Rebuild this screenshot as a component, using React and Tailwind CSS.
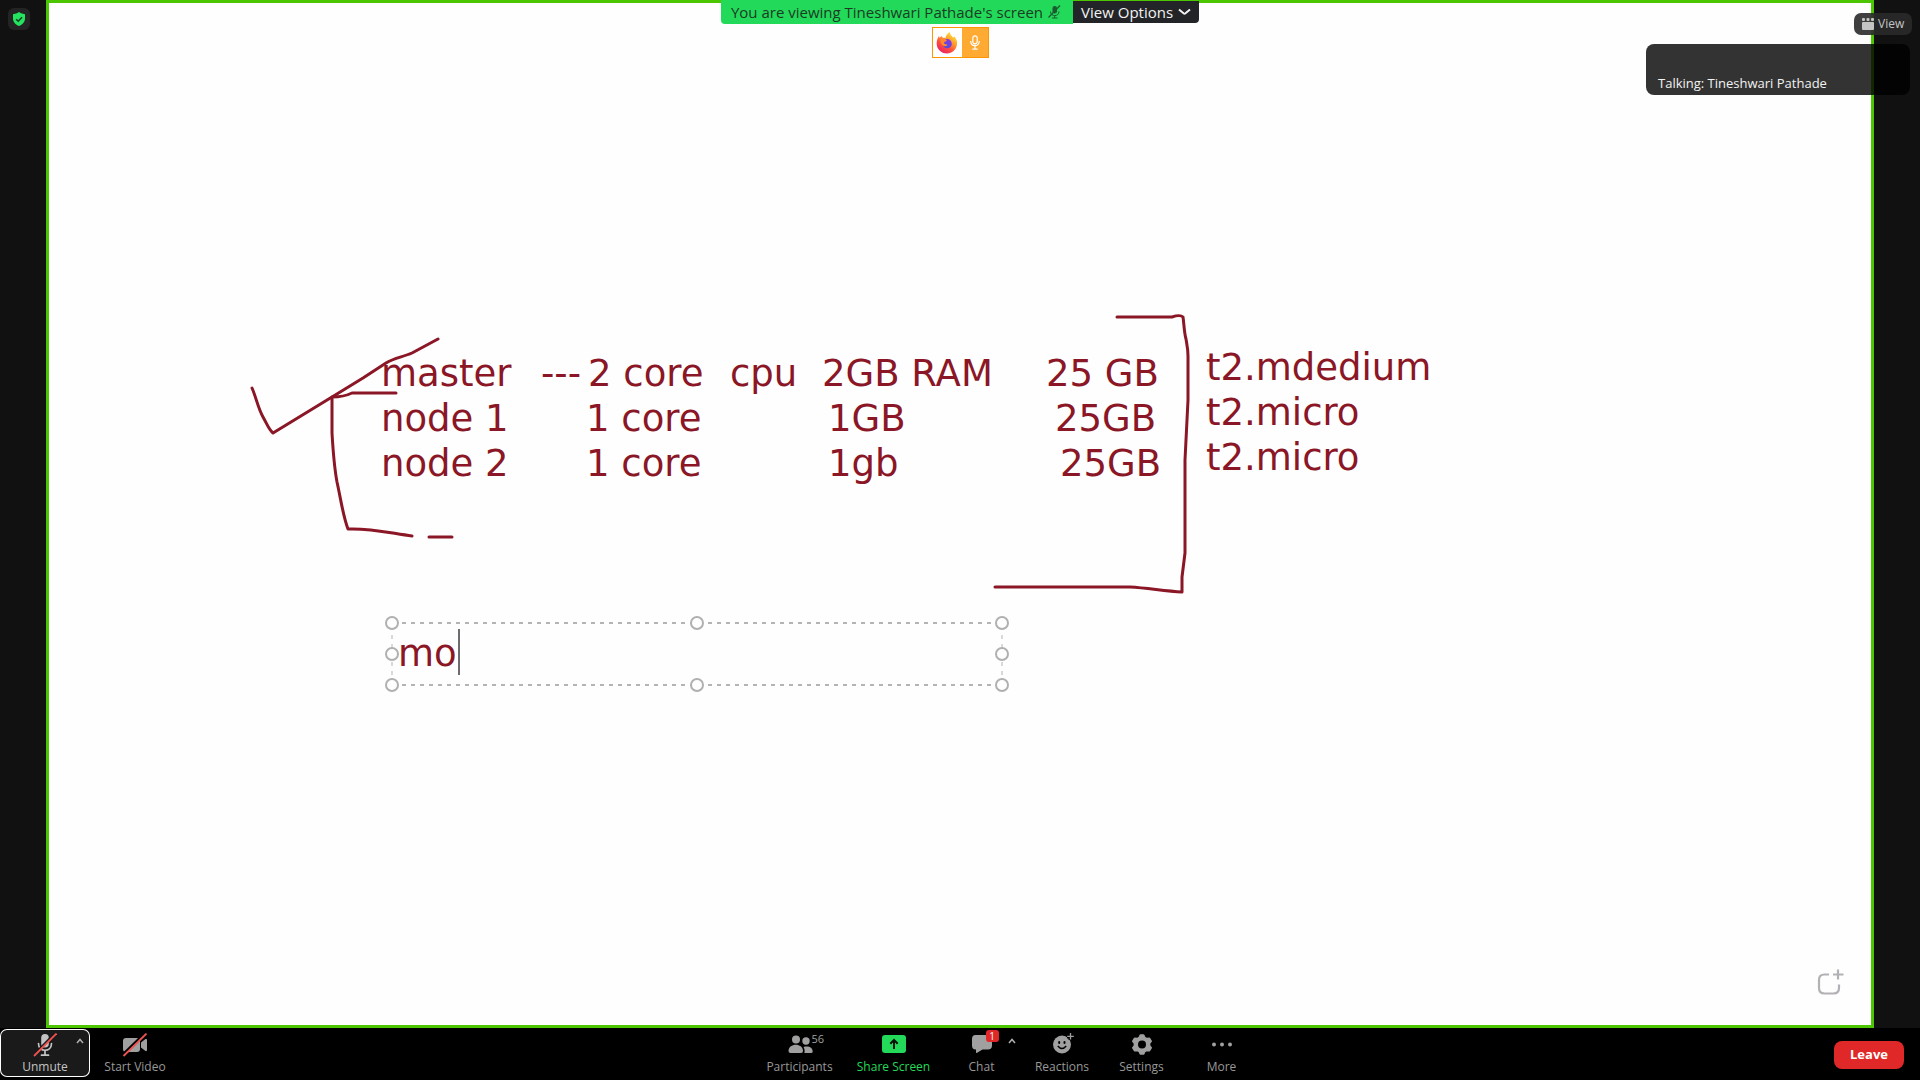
import React from "react";

const INK = "#8a1626";

/* Text runs typed on the shared whiteboard */
const RUNS = [
  { text: "master", at: "left-[332px] top-[348px]" },
  { text: "---", at: "left-[492px] top-[348px]" },
  { text: "2 core", at: "left-[539px] top-[348px]" },
  { text: "cpu", at: "left-[681px] top-[348px]" },
  { text: "2GB RAM", at: "left-[773px] top-[348px]" },
  { text: "25 GB", at: "left-[997px] top-[348px]" },
  { text: "node 1", at: "left-[332px] top-[393px]" },
  { text: "1 core", at: "left-[537px] top-[393px]" },
  { text: "1GB", at: "left-[779px] top-[393px]" },
  { text: "25GB", at: "left-[1006px] top-[393px]" },
  { text: "node 2", at: "left-[332px] top-[438px]" },
  { text: "1 core", at: "left-[537px] top-[438px]" },
  { text: "1gb", at: "left-[779px] top-[438px]" },
  { text: "25GB", at: "left-[1011px] top-[438px]" },
  { text: "t2.mdedium", at: "left-[1157px] top-[342px]" },
  { text: "t2.micro", at: "left-[1157px] top-[387px]" },
  { text: "t2.micro", at: "left-[1157px] top-[432px]" },
];

const HANDLES = [
  [8, 8], [313, 8], [618, 8],
  [8, 39], [618, 39],
  [8, 70], [313, 70], [618, 70],
];

function Strokes() {
  return (
    <svg
      className="absolute left-[191px] top-[297px]"
      width="970"
      height="310"
      viewBox="240 300 970 310"
      fill="none"
      stroke={INK}
      strokeWidth="3"
      strokeLinecap="round"
      strokeLinejoin="round"
      aria-hidden="true"
    >
      <path d="M252 388 C256 397 258 408 263 417 C267 424 269 430 273 433 L332 397 L363 378 L386 363 C394 358 403 357 412 353 L438 339" />
      <path d="M396 393 H352 C346 396 340 397 332 397 V433 C333 450 334 466 337 482 C341 500 343 516 348 529 C370 528 390 533 412 536" />
      <path d="M429 537 H452" />
      <path d="M1117 317 H1172 C1178 315 1181 315 1183 317 C1184 323 1184 332 1186 339 C1187 345 1188 349 1188 356 V400 L1185 460 V553 L1182 577 L1182 592 C1164 591 1148 588 1130 587 H995" />
    </svg>
  );
}

function EditBox() {
  return (
    <div className="absolute left-[335px] top-[612px] h-[78px] w-[626px]">
      <svg className="absolute inset-0" width="626" height="78" viewBox="0 0 626 78" fill="none" aria-hidden="true">
        <path d="M18 8 H608 M18 70 H608" stroke="#b4b4b4" strokeWidth="2" strokeDasharray="4 5" />
        <path d="M8 20 V66 M618 20 V66" stroke="#b4b4b4" strokeWidth="1" strokeDasharray="4 5" />
        {HANDLES.map(([x, y]) => (
          <circle key={x + "-" + y} cx={x} cy={y} r="6" stroke="#b0b0b2" strokeWidth="2" fill="#fefefe" />
        ))}
      </svg>
      <input
        aria-label="Whiteboard text"
        defaultValue="mo"
        className="absolute left-[14px] top-4 h-[45px] w-[590px] bg-transparent font-['DejaVu_Sans',sans-serif] text-[37px] leading-[45px] text-[#8a1626] outline-none"
      />
      <span className="absolute left-[74px] top-[14px] h-[46px] w-[2px] bg-[#6d6a72]" />
    </div>
  );
}

function Mic({ muted }) {
  return (
    <svg width="24" height="24" viewBox="0 0 24 24" aria-hidden="true">
      <rect x="8.200" y="1" width="7.600" height="13.500" rx="3.800" fill="#c4c4c4" />
      <path d="M5.500 10.500 C5.500 19.500 18.500 19.500 18.500 10.500 M12 17.500 V22 M8.500 22.200 H15.500" stroke="#c4c4c4" strokeWidth="1.700" fill="none" strokeLinecap="round" />
      {muted && (
        <g fill="none">
          <path d="M1 21.500 L22 0" stroke="#1a1a1a" strokeWidth="2" />
          <path d="M1 23 L23.500 .5" stroke="#f0524f" strokeWidth="1.800" />
        </g>
      )}
    </svg>
  );
}

function Caret() {
  return (
    <svg width="8" height="6" viewBox="0 0 8 6" fill="none" aria-hidden="true">
      <path d="M1 5 L4 1.500 L7 5" stroke="#b0b0b0" strokeWidth="1.500" />
    </svg>
  );
}

function VideoOff() {
  return (
    <svg width="26" height="24" viewBox="0 0 26 24" aria-hidden="true">
      <rect x="1" y="5" width="17" height="14" rx="3" fill="#a0a0a0" />
      <path d="M19 9.500 L23.500 6 Q25 5.500 25 7 V17 Q25 18.500 23.500 18 L19 14.500Z" fill="#a0a0a0" />
      <path d="M1 21.500 L23 0" stroke="#000" strokeWidth="2.500" />
      <path d="M1.500 23 L24.500 .5" stroke="#f0524f" strokeWidth="1.800" />
    </svg>
  );
}

function ParticipantsIcon() {
  return (
    <svg width="26" height="24" viewBox="0 0 26 24" fill="#a0a0a0" aria-hidden="true">
      <circle cx="9" cy="6.500" r="4" />
      <path d="M1.500 18 C1.500 9.500 16 9.500 16 18 Q16 20 14 20 H3.500 Q1.500 20 1.500 18Z" />
      <circle cx="19" cy="8" r="3.700" />
      <path d="M16.500 14 C21.500 12.500 25.700 14.500 25.700 18.500 Q25.700 20 24 20 H17.300 C18 18 17.700 16 16.500 14Z" />
    </svg>
  );
}

function ShareIcon() {
  return (
    <svg width="24" height="24" viewBox="0 0 24 24" aria-hidden="true">
      <rect x="0" y="2" width="24" height="18" rx="3" fill="#23d959" />
      <path d="M12 16 V7.500 M8.300 10.700 L12 7 L15.700 10.700" stroke="#06130a" strokeWidth="2" fill="none" />
    </svg>
  );
}

function ChatIcon() {
  return (
    <svg width="22" height="24" viewBox="0 0 22 24" fill="#a0a0a0" aria-hidden="true">
      <path d="M4.500 2 H17 Q21 2 21 6 V12.500 Q21 16.500 17 16.500 H11.500 L5.800 20 Q5 20.300 5 19.300 V16.500 H4.500 Q1 16.500 1 12.500 V6 Q1 2 4.500 2Z" />
    </svg>
  );
}

function ReactionsIcon() {
  return (
    <svg width="24" height="24" viewBox="0 0 24 24" aria-hidden="true">
      <circle cx="12" cy="11.500" r="9" fill="#a0a0a0" />
      <path d="M20.500 0 V7 M17 3.500 H24" stroke="#000" strokeWidth="4" />
      <path d="M20.500 0 V6.500 M17.200 3.300 H23.800" stroke="#a0a0a0" strokeWidth="1.300" />
      <rect x="8.200" y="8" width="2" height="3" rx="1" fill="#000" />
      <rect x="13.500" y="8" width="2" height="3" rx="1" fill="#000" />
      <path d="M7.800 13 Q12 18 16.200 13" stroke="#000" strokeWidth="1.500" fill="none" />
    </svg>
  );
}

function SettingsIcon() {
  return (
    <svg width="24" height="24" viewBox="0 0 24 24" aria-hidden="true">
      <path
        d="M10.300 2 H13.700 L14.800 4.500 L16.800 5.600 L19.500 5.300 L21.200 8.200 L19.600 10.400 V12.600 L21.200 14.800 L19.500 17.700 L16.800 17.400 L14.800 18.500 L13.700 21 H10.300 L9.200 18.500 L7.200 17.400 L4.500 17.700 L2.800 14.800 L4.400 12.600 V10.400 L2.800 8.200 L4.500 5.300 L7.200 5.600 L9.200 4.500Z"
        fill="#a0a0a0"
        stroke="#a0a0a0"
        strokeWidth="1.500"
        strokeLinejoin="round"
      />
      <circle cx="12" cy="11.500" r="4" fill="#000" />
    </svg>
  );
}

function MoreIcon() {
  return (
    <svg width="24" height="24" viewBox="0 0 24 24" fill="#a0a0a0" aria-hidden="true">
      <circle cx="4" cy="11.500" r="2" />
      <circle cx="12" cy="11.500" r="2" />
      <circle cx="20" cy="11.500" r="2" />
    </svg>
  );
}

function Tool({ label, icon, width, color = "text-[#989898]", frame = "", children }) {
  return (
    <button className={`relative flex h-12 flex-col items-center gap-0.5 pt-1 ${width} ${color} ${frame}`}>
      {icon}
      <span className="text-[12px] leading-4 whitespace-nowrap">{label}</span>
      {children}
    </button>
  );
}

function Firefox() {
  return (
    <svg width="22" height="22" viewBox="0 0 22 22" aria-hidden="true">
      <defs>
        <linearGradient id="flame" x1="0.85" y1="0" x2="0.2" y2="1">
          <stop offset="0" stopColor="#fff04a" />
          <stop offset="0.35" stopColor="#ffa52a" />
          <stop offset="0.65" stopColor="#ff4f3c" />
          <stop offset="1" stopColor="#e6196a" />
        </linearGradient>
        <linearGradient id="globe" x1="0.7" y1="0" x2="0.3" y2="1">
          <stop offset="0" stopColor="#8a35e8" />
          <stop offset="1" stopColor="#4a50d8" />
        </linearGradient>
      </defs>
      <path d="M13.500 0 C14 3 16 3.500 17 5.500 L18.500 4.500 C20.500 7 21.500 9.500 21 12.500 C20.200 18 16 21.500 11 21.500 C5 21.500 .7 17 .7 11.500 C.7 8.500 1.600 6 3 4 L3.500 6 L5.500 4 L7 6 C8 5.500 9 5.700 9.700 6 C9.500 3.500 11.500 1.500 13.500 0Z" fill="url(#flame)" />
      <circle cx="11.200" cy="11.700" r="4.600" fill="url(#globe)" />
      <path d="M4.500 7 C7 6 9.500 7 11 8.700 L8.500 10 C7.500 10.600 8 12.200 10 12.300 C12 12.500 12 14 9 14.200 C6 14 4.200 11 4.500 7Z" fill="#ff8a2c" />
    </svg>
  );
}

export default function App() {
  return (
    <div className="relative flex h-screen w-full flex-col overflow-hidden bg-[#111111] font-['Open_Sans','Noto_Sans',sans-serif]">
      <main className="relative mx-[46px] min-h-0 flex-1 overflow-hidden border-[3px] border-[#4cc600] bg-[#fefefe]">
        {RUNS.map((r) => (
          <span
            key={r.at}
            className={`absolute font-['DejaVu_Sans',sans-serif] text-[37px] leading-[45px] whitespace-pre text-[#8a1626] ${r.at}`}
          >
            {r.text}
          </span>
        ))}
        <Strokes />
        <EditBox />
        <svg className="absolute right-[27px] bottom-[29px]" width="28" height="28" viewBox="0 0 28 28" fill="none" stroke="#b3b0b6" strokeWidth="2.200" aria-hidden="true">
          <path d="M13 6.500 H8.500 Q3 6.500 3 12 V20 Q3 25.500 8.500 25.500 H17.500 Q23 25.500 23 20 V16.500" />
          <path d="M22 1.500 V11.500 M17 6.500 H27.500" />
        </svg>
      </main>

      <footer className="flex h-[52px] shrink-0 justify-between bg-black pt-px">
        <div className="flex">
          <Tool label="Unmute" icon={<Mic muted />} width="w-[90px]" color="text-[#c4c4c4]" frame="rounded-[7px] bg-[#1a1a1a] ring-1 ring-inset ring-white">
            <span className="absolute top-[9px] right-[6px]"><Caret /></span>
          </Tool>
          <Tool label="Start Video" icon={<VideoOff />} width="w-[90px]" />
        </div>
        <div className="flex">
          <Tool label="Participants" icon={<ParticipantsIcon />} width="w-[94px]">
            <span className="absolute top-[2px] left-[59px] text-[11px] leading-4 text-[#a0a0a0]">56</span>
          </Tool>
          <Tool label="Share Screen" icon={<ShareIcon />} width="w-[94px]" color="text-[#23d959]" />
          <Tool label="Chat" icon={<ChatIcon />} width="w-[82px]">
            <span className="absolute top-px left-[45px] h-3 w-[13px] rounded-[3px] bg-[#e02828] text-center text-[10px] leading-3 text-white">1</span>
            <span className="absolute top-[9px] right-[7px]"><Caret /></span>
          </Tool>
          <Tool label="Reactions" icon={<ReactionsIcon />} width="w-[79px]" />
          <Tool label="Settings" icon={<SettingsIcon />} width="w-[80px]" />
          <Tool label="More" icon={<MoreIcon />} width="w-[80px]" />
        </div>
        <div className="flex items-center pr-4">
          <button className="h-7 w-[70px] rounded-[8px] bg-[#e02828] text-[13px] font-bold text-white">Leave</button>
        </div>
      </footer>

      {/* Floating overlays */}
      <span className="absolute top-2 left-2 flex size-[22px] items-center justify-center rounded-[6px] bg-[#242424]">
        <svg width="14" height="14" viewBox="0 0 14 14" aria-label="Encrypted" role="img">
          <path d="M7 0 L9 1.300 L13 2.300 V6.500 C13 10 10.500 12.500 7 14 C3.500 12.500 1 10 1 6.500 V2.300 L5 1.300Z" fill="#23e35f" />
          <path d="M4.200 7.300 L6.200 9.200 L10 5.200" stroke="#173b22" strokeWidth="1.500" fill="none" />
        </svg>
      </span>

      <div className="absolute inset-x-0 top-0 flex flex-col items-center gap-[3px]">
        <div className="flex h-6 items-start text-[15px] leading-[22px]">
          <div className="flex h-6 items-center gap-[5px] rounded-bl-[4px] bg-[#23d959] pr-3 pl-[10px] text-[#1b3b25]">
            <span className="whitespace-nowrap">You are viewing Tineshwari Pathade's screen</span>
            <svg width="13" height="14" viewBox="0 0 13 14" fill="none" aria-hidden="true">
              <rect x="4.500" y="1" width="4.500" height="7.500" rx="2.200" fill="#1b5c30" />
              <path d="M2.500 6.500 C2.500 12 11 12 11 6.500 M6.700 10.500 V13 M4 13 H9.500" stroke="#1b5c30" />
              <path d="M.5 12.500 L12 .5" stroke="#1b5c30" strokeWidth="1.300" />
            </svg>
          </div>
          <button className="mt-px flex h-[22px] items-center gap-[5px] rounded-br-[4px] bg-[#232427] px-2 whitespace-nowrap text-[#f2f2f2]">
            View Options
            <svg width="13" height="8" viewBox="0 0 13 8" fill="none" aria-hidden="true">
              <path d="M1 1.500 L5.500 5.300 Q6.500 6 7.500 5.300 L12 1.500" stroke="#f2f2f2" strokeWidth="2" />
            </svg>
          </button>
        </div>
        <div className="flex h-[31px] border border-[#ff9500] bg-white">
          <span className="flex w-[29px] items-center justify-center"><Firefox /></span>
          <span className="flex w-[26px] items-center justify-center bg-[#ffaa33]">
            <svg width="10" height="15" viewBox="0 0 10 15" fill="none" stroke="#fff" strokeWidth="1.200" aria-hidden="true">
              <rect x="2.800" y=".8" width="4.400" height="8" rx="2.200" />
              <path d="M.7 6 C.7 12.200 9.300 12.200 9.300 6 M5 10.800 V14 M2.300 14.200 H7.700" />
            </svg>
          </span>
        </div>
      </div>

      <button className="absolute top-[13px] right-2 flex h-[22px] w-[58px] items-center gap-1 rounded-[7px] bg-[#2a2a2a]/90 pl-2 text-[12px] text-[#c4c4c4]">
        <svg width="12" height="12" viewBox="0 0 12 12" fill="#c4c4c4" aria-hidden="true">
          <rect x="0" y="4" width="12" height="8" rx="1" />
          <rect x="0" y="0" width="3" height="3" rx="1" />
          <rect x="4.500" y="0" width="3" height="3" rx="1" />
          <rect x="9" y="0" width="3" height="3" rx="1" />
        </svg>
        View
      </button>
      <div className="absolute top-11 right-[10px] flex h-[51px] w-[264px] items-end rounded-[8px] bg-black/80 px-3 pb-[3px] text-[13px] leading-[18px] text-[#f2f2f2]">
        Talking: Tineshwari Pathade
      </div>
    </div>
  );
}
